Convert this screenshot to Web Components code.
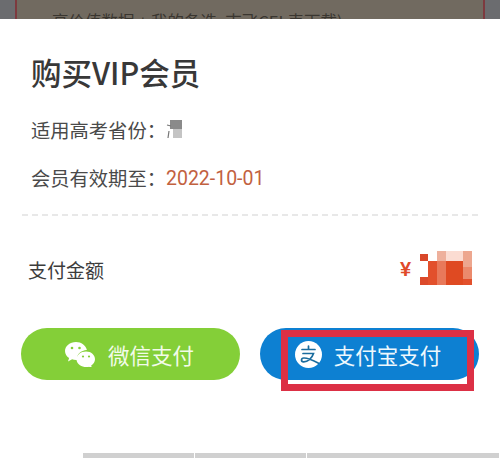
<!DOCTYPE html>
<html lang="zh">
<head>
<meta charset="utf-8">
<title>购买VIP会员</title>
<style>
  html, body { margin: 0; height: 458px; overflow: hidden; background: #fff; }
  body { font-family: "Noto Sans CJK SC", "Noto Sans", sans-serif; }
</style>
</head>
<body>
<vip-page>
  <dim-backdrop slot="backdrop">高价值数据 + 我的备选, 志飞CEL表下载)</dim-backdrop>
  <info-row label="适用高考省份：">
    <svg width="16" height="20" viewBox="0 0 16 20">
      <rect x="4" y="0" width="12" height="9" fill="#8a8a8a"/>
      <rect x="7" y="9" width="9" height="9" fill="#c4c4c4"/>
      <path d="M1 5l4 1M3 11l-1 7" stroke="#777" stroke-width="1.2" fill="none"/>
    </svg>
  </info-row>
  <info-row label="会员有效期至："><span style="color:#c2613f;font-family:Roboto,sans-serif;font-size:19.500px">2022-10-01</span></info-row>
  <amount-row></amount-row>
  <pay-buttons></pay-buttons>
</vip-page>
<script>
class VipPage extends HTMLElement {
    connectedCallback() {
        this.attachShadow({ mode: 'open' });
        this.shadowRoot.innerHTML = `
            <style>
                :host { display: block; height: 458px; overflow: hidden; position: relative; }
                .sheet {
                    height: 439px;
                    box-sizing: border-box;
                    padding: 31px 0 0;
                    background: #fff;
                    border-radius: 22px 22px 0 0;
                    position: relative;
                }
                h1 {
                    margin: 0 0 22px 31px;
                    font-size: 30.500px;
                    line-height: 44px;
                    font-weight: 500;
                    color: #383838;
                }
                .rows { display: flex; flex-direction: column; gap: 20px; }
                .tabs {
                    position: absolute;
                    left: 83px;
                    bottom: 0;
                    display: flex;
                    gap: 1px;
                }
                .tabs i { display: block; width: 111px; height: 5px; background: #d0d0d0; }
                .tabs i:last-child { width: 192px; }
            </style>
            <slot name="backdrop"></slot>
            <div class="sheet">
                <h1>购买VIP会员</h1>
                <div class="rows"><slot></slot></div>
                <div class="tabs"><i></i><i></i><i></i></div>
            </div>
        `;
    }
}

class DimBackdrop extends HTMLElement {
    connectedCallback() {
        this.attachShadow({ mode: 'open' });
        this.shadowRoot.innerHTML = `
            <style>
                :host { display: block; height: 19px; overflow: hidden; background: #6b6c6f; padding: 0 15px; box-sizing: border-box; }
                .card {
                    height: 19px;
                    box-sizing: border-box;
                    background: #716a60;
                    border-left: 2px solid #7d3a3f;
                    border-right: 2px solid #7d3a3f;
                    padding: 9px 0 0 35px;
                    font-size: 16.500px;
                    line-height: 24px;
                    color: #3a3630;
                    white-space: nowrap;
                }
            </style>
            <div class="card"><slot></slot></div>
        `;
    }
}

class InfoRow extends HTMLElement {
    connectedCallback() {
        this.attachShadow({ mode: 'open' });
        this.shadowRoot.innerHTML = `
            <style>
                :host { display: flex; align-items: center; height: 28px; padding-left: 31px; color: #4a4a4a; font-size: 19.300px; }
                .value { display: inline-flex; align-items: center; }
            </style>
            <span>${this.getAttribute('label')}</span>
            <span class="value"><slot></slot></span>
        `;
    }
}

class AmountRow extends HTMLElement {
    connectedCallback() {
        this.attachShadow({ mode: 'open' });
        this.shadowRoot.innerHTML = `
            <style>
                :host {
                    display: flex;
                    align-items: center;
                    justify-content: space-between;
                    margin: 2px 22px 0;
                    padding: 35px 6px 0 6px;
                    height: 36px;
                    border-top: 2px dashed #e8e8e8;
                    font-size: 19px;
                    color: #3c3c3c;
                }
                .price { display: flex; align-items: center; gap: 7px; color: #e04a2a; }
                .yen { font: 700 20px "Liberation Sans", sans-serif; }
            </style>
            <span>支付金额</span>
            <span class="price">
                <span class="yen">¥</span>
                <svg width="54" height="36" viewBox="0 0 54 36">
                    <rect x="2" y="3" width="8" height="7" fill="#d9472a"/>
                    <rect x="2" y="26" width="8" height="8" fill="#dc4a2b"/>
                    <rect x="10" y="10" width="9" height="24" fill="#e2502c"/>
                    <rect x="19" y="0" width="9" height="10" fill="#eeb09c"/>
                    <rect x="19" y="10" width="9" height="24" fill="#e8795a"/>
                    <rect x="28" y="0" width="17" height="10" fill="#fbdcd2"/>
                    <rect x="28" y="10" width="17" height="24" fill="#df4a22"/>
                    <rect x="45" y="0" width="9" height="16" fill="#eda78f"/>
                    <rect x="45" y="16" width="9" height="12" fill="#eb8a6c"/>
                    <rect x="45" y="28" width="9" height="6" fill="#e2502c"/>
                </svg>
            </span>
        `;
    }
}

class PayButtons extends HTMLElement {
    connectedCallback() {
        this.attachShadow({ mode: 'open' });
        this.shadowRoot.innerHTML = `
            <style>
                :host {
                    display: grid;
                    grid-template-columns: 219px 219px;
                    gap: 20px;
                    padding: 21px 21px 0;
                    position: relative;
                }
                .btn {
                    height: 52px;
                    border-radius: 26px;
                    display: flex;
                    align-items: center;
                    justify-content: center;
                    gap: 12px;
                    padding-right: 3px;
                    color: #f2fbe9;
                    font-size: 21.500px;
                }
                .wechat { background: #84cf38; }
                .alipay { background: #0d80d2; color: #eef8fd; }
                .mark {
                    position: absolute;
                    left: 281px;
                    top: 23px;
                    width: 193px;
                    height: 61px;
                    box-sizing: border-box;
                    border: 7px solid #dc3045;
                    pointer-events: none;
                }
            </style>
            <div class="btn wechat">
                <svg width="32" height="26" viewBox="0 0 32 26">
                    <path d="M12 1C5.900 1 1 5 1 10c0 2.900 1.600 5.400 4.100 7L4 20.500l4.100-2.200c1.200.4 2.500.6 3.900.6h1.200C12.300 13 17 9.500 22.900 9 21.800 4.500 17.300 1 12 1z" fill="#fff"/>
                    <circle cx="8" cy="7" r="1.300" fill="#84cf38"/><circle cx="15.500" cy="7" r="1.300" fill="#84cf38"/>
                    <path d="M22 10.500c-5.200 0-9.500 3.500-9.500 7.800s4.300 7.800 9.500 7.800c1 0 2-.1 3-.4l3 1.600-.8-2.700c2.400-1.500 3.800-3.700 3.800-6.300 0-4.300-3.800-7.800-9-7.800z" fill="#fff"/>
                    <circle cx="19" cy="15.500" r="1.100" fill="#84cf38"/><circle cx="25" cy="15.500" r="1.100" fill="#84cf38"/>
                </svg>
                <span>微信支付</span>
            </div>
            <div class="btn alipay">
                <svg width="27" height="27" viewBox="0 0 27 27">
                    <circle cx="13.500" cy="13.500" r="13.500" fill="#fff"/>
                    <path d="M7 8.500h13M13.500 5v3.500M8 12.500h10.500C17 17.500 12.500 21 8.500 20.800c-2.600-.1-2.800-3.600.3-3.800 4-.3 9 2.300 14.700 5.200" fill="none" stroke="#1a6c9e" stroke-width="1.700" stroke-linecap="round"/>
                </svg>
                <span>支付宝支付</span>
            </div>
            <div class="mark"></div>
        `;
    }
}

customElements.define('vip-page', VipPage);
customElements.define('dim-backdrop', DimBackdrop);
customElements.define('info-row', InfoRow);
customElements.define('amount-row', AmountRow);
customElements.define('pay-buttons', PayButtons);
</script>
</body>
</html>
